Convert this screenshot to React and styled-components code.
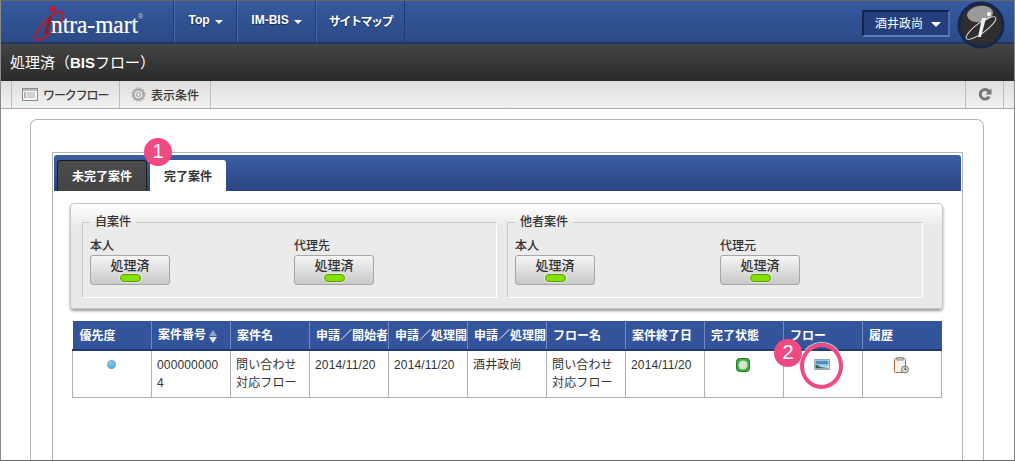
import styled, { createGlobalStyle } from 'styled-components';

const Global = createGlobalStyle`
  html, body {
    margin: 0;
    padding: 0;
    background: #fff;
  }
  * {
    box-sizing: border-box;
  }
`;

const jp = `"Liberation Sans", "Noto Sans CJK JP", sans-serif`;

const Page = styled.div`
  position: relative;
  width: 1015px;
  height: 461px;
  overflow: hidden;
  background: #fff;
  font-family: ${jp};
  border: 1px solid #8a8a8a;
  border-top-color: #666;
  border-bottom-color: #666;
  color: #333;
`;

const Header = styled.div`
  display: flex;
  height: 43px;
  background: linear-gradient(#365a9e, #2b4a86);
  border-bottom: 2px solid #22365f;
`;

const LogoBox = styled.div`
  width: 173px;
  border-right: 1px solid #1f3a72;
  padding-left: 24px;
  padding-top: 1px;
`;

const NavItem = styled.div`
  display: flex;
  align-items: center;
  justify-content: center;
  gap: 5px;
  width: ${(p) => p.$w}px;
  height: 41px;
  padding-bottom: 3px;
  color: #fff;
  font-size: 12px;
  font-weight: bold;
  border-left: 1px solid #4a6cb0;
  border-right: 1px solid #1f3a72;
  text-shadow: 0 1px 1px #14264d;
`;

const Caret = styled.span`
  display: inline-block;
  margin-top: 4px;
  border-left: ${(p) => p.$size || 4}px solid transparent;
  border-right: ${(p) => p.$size || 4}px solid transparent;
  border-top: ${(p) => p.$size || 4}px solid #fff;
`;

const Kana = styled.span`
  letter-spacing: ${(p) => p.$ls}px;
`;

const HeaderRight = styled.div`
  display: flex;
  align-items: flex-start;
  margin-left: auto;
  padding-right: 9px;
  gap: 7px;
`;

const UserSelect = styled.div`
  display: flex;
  align-items: center;
  justify-content: space-between;
  width: 88px;
  height: 27px;
  margin-top: 9px;
  padding: 0 7px 2px 11px;
  color: #fff;
  font-size: 12px;
  background: #243f7c;
  border: 2px solid #13244d;
  border-right-color: #4a6cb0;
  border-bottom-color: #5f7db8;
`;

const Avatar = styled.svg`
  width: 48px;
  height: 48px;
  position: relative;
  z-index: 2;
`;

const TitleBar = styled.div`
  height: 37px;
  padding: 9px 0 0 9px;
  background: linear-gradient(#454545, #2a2a2a);
  color: #fff;
  font-size: 15px;
  line-height: 20px;
`;

const Toolbar = styled.div`
  display: flex;
  height: 28px;
  padding: 0 10px;
  background: linear-gradient(#dedede, #f1f1f1);
  border-bottom: 1px solid #a8a8a8;
`;

const ToolItem = styled.div`
  display: flex;
  align-items: center;
  gap: 5px;
  width: ${(p) => p.$w}px;
  height: 27px;
  padding-left: ${(p) => p.$pad}px;
  padding-bottom: 1px;
  font-size: 12px;
  font-weight: 500;
  color: #3a3a3a;
  border-left: 1px solid #bdbdbd;
  border-right: ${(p) => (p.$last ? '1px solid #bdbdbd' : 'none')};
`;

const ReloadItem = styled(ToolItem)`
  margin-left: auto;
  justify-content: center;
  padding-left: 0;
`;

const Content = styled.div`
  padding: 10px 30px 0 29px;
`;

const Card = styled.div`
  height: 360px;
  padding: 32px 20px 0 21px;
  border: 1px solid #b4b4b4;
  border-bottom: none;
  border-radius: 7px 7px 0 0;
`;

const Panel = styled.div`
  height: 320px;
  padding: 2px 1px 0;
  border: 1px solid #b4b4b4;
  border-bottom: none;
`;

const TabBar = styled.div`
  display: flex;
  align-items: flex-end;
  gap: 3px;
  height: 36px;
  padding-left: 3px;
  background: linear-gradient(#3b5fa5, #2a4580);
  border-radius: 3px 3px 0 0;
`;

const Tab = styled.div`
  display: flex;
  align-items: center;
  justify-content: center;
  width: ${(p) => p.$w}px;
  height: 31px;
  font-size: 12px;
  font-weight: bold;
  padding-bottom: 1px;
  border-radius: 3px 3px 0 0;
  color: ${(p) => (p.$active ? '#333' : '#fff')};
  background: ${(p) => (p.$active ? '#fff' : 'linear-gradient(#4c4c4c, #444)')};
  border: ${(p) => (p.$active ? 'none' : '1px solid #1d1d1d')};
  border-bottom: none;
`;

const SearchBox = styled.div`
  display: flex;
  gap: 10px;
  width: 873px;
  height: 106px;
  margin: 12px 0 0 16px;
  padding: 11px 20px 0 11px;
  background: linear-gradient(#fff, #e9e9e9 22%);
  border: 1px solid #c8c8c8;
  border-radius: 4px;
  box-shadow: 0 2px 3px #9a9a9a;
`;

const Group = styled.fieldset`
  display: flex;
  flex: none;
  width: ${(p) => p.$w}px;
  min-width: 0;
  height: 83px;
  margin: 0;
  padding: 11px 0 0 7px;
  border: 1px solid #c9c9c9;
  border-bottom-color: #fff;
  border-right-color: #fff;
  background: #ebebeb;
`;

const GroupTitle = styled.legend`
  padding: 0 5px;
  font-size: 12px;
  line-height: 14px;
  font-weight: 500;
  color: #333;
`;

const PersonCol = styled.div`
  flex: none;
  width: ${(p) => p.$w}px;
  font-size: 12px;
  font-weight: 500;
  line-height: 13px;
  color: #333;
`;

const StatusButton = styled.div`
  display: flex;
  flex-direction: column;
  align-items: center;
  width: 80px;
  height: 30px;
  margin-top: 2px;
  padding-top: 2px;
  font-size: 13px;
  line-height: 15px;
  font-weight: 500;
  background: linear-gradient(#f6f6f6, #c8c8c8);
  border: 1px solid #a6a6a6;
  border-radius: 3px;
`;

const Lamp = styled.span`
  display: block;
  width: 21px;
  height: 8px;
  margin-top: 1px;
  border-radius: 4px;
  background: #84e000;
  border: 1px solid #5da000;
  box-shadow: 0 0 0 1px #e4e4e4;
`;

const Table = styled.table`
  width: 870px;
  margin: 12px 0 0 18px;
  border-collapse: collapse;
  table-layout: fixed;
`;

const Th = styled.th`
  width: 79px;
  height: 29px;
  padding: 0 0 2px ${(p) => (p.$first ? 7 : 6)}px;
  overflow: hidden;
  white-space: nowrap;
  text-align: left;
  font-size: 12px;
  font-weight: bold;
  color: #fff;
  background: #33549a;
  border-left: 1px solid #6f8ac2;
  border-bottom: 2px solid #24396b;
  &:first-child {
    border-left: none;
  }
`;

const Td = styled.td`
  height: 47px;
  padding: 5px 8px 0 5px;
  vertical-align: top;
  font-size: 12px;
  letter-spacing: 0.15px;
  line-height: 18px;
  color: #333;
  border: 1px solid #b0b0b0;
  word-break: break-all;
`;

const IconTd = styled(Td)`
  padding: ${(p) => p.$top}px 2px 0 0;
  svg {
    display: block;
    margin: 0 auto;
  }
`;

const SortIcon = styled.span`
  display: inline-flex;
  flex-direction: column;
  gap: 1px;
  margin-left: 3px;
  vertical-align: middle;
`;

const SortUp = styled.span`
  border-left: 4px solid transparent;
  border-right: 4px solid transparent;
  border-bottom: 6px solid #8fa3c8;
`;

const SortDown = styled.span`
  border-left: 4px solid transparent;
  border-right: 4px solid transparent;
  border-top: 6px solid #e8edf5;
`;

const Dot = styled.span`
  display: block;
  width: 9px;
  height: 9px;
  margin: 0 auto;
  border-radius: 50%;
  background: radial-gradient(circle at 40% 35%, #8cc8ee, #3f97d4);
`;

const Badge = styled.div`
  position: absolute;
  left: ${(p) => p.$x}px;
  top: ${(p) => p.$y}px;
  width: 28px;
  height: 28px;
  border-radius: 50%;
  background: #ef4a81;
  color: #fff;
  font-size: 20px;
  line-height: 27px;
  text-align: center;
  z-index: 3;
`;

const Ring = styled.div`
  position: absolute;
  left: 799px;
  top: 342px;
  width: 43px;
  height: 46px;
  border: 4px solid #ef4a81;
  border-radius: 50%;
  box-shadow: 0 0 1px 1px rgba(255, 255, 255, 0.8);
  z-index: 2;
`;

const Logo = () => (
  <svg width="122" height="40" viewBox="0 0 122 40">
    <ellipse cx="24" cy="24" rx="6" ry="19" transform="rotate(44 24 24)" fill="none" stroke="#b81c2c" strokeWidth="2" />
    <circle cx="28" cy="7" r="3" fill="#c8182a" />
    <path d="M25.5 15l-5 17" stroke="#8c1a2a" strokeWidth="3.4" />
    <text x="26" y="31" fontFamily="Liberation Serif, serif" fontSize="25" fill="#fff" stroke="#fff" strokeWidth="0.2" textLength="87" lengthAdjust="spacingAndGlyphs">ntra-mart</text>
    <text x="113" y="17" fontFamily="Liberation Sans, sans-serif" fontSize="7" fill="#ccc">®</text>
  </svg>
);

const AvatarIcon = () => (
  <Avatar viewBox="0 0 48 48">
    <circle cx="24" cy="24" r="23.5" fill="#16264e" />
    <circle cx="24" cy="24" r="20.5" fill="#2e2e2e" />
    <ellipse cx="23" cy="13" rx="13" ry="8" transform="rotate(-8 23 13)" fill="#9a9a9a" />
    <ellipse cx="24" cy="27" rx="5" ry="18" transform="rotate(54 24 27)" fill="none" stroke="#ddd" strokeWidth="1" />
    <path d="M25 17h4l-5 19h-3z" fill="#efefef" />
    <circle cx="32" cy="13" r="2.2" fill="#efefef" />
  </Avatar>
);

const WorkflowIcon = () => (
  <svg width="16" height="13" viewBox="0 0 16 13">
    <rect x="0.5" y="0.5" width="15" height="12" fill="#f5f5f5" stroke="#8c8c8c" />
    <rect x="1" y="1" width="14" height="2" fill="#bbb" />
    <path d="M2 5h2" stroke="#4a9a3a" />
    <path d="M2 7h2" stroke="#3a78c8" />
    <path d="M2 9h2" stroke="#c84a3a" />
    <path d="M5 5h8M5 7h8M5 9h8" stroke="#aaa" />
  </svg>
);

const GearIcon = () => (
  <svg width="15" height="15" viewBox="0 0 15 15">
    <circle cx="7.5" cy="7.5" r="5" fill="none" stroke="#aaa" strokeWidth="2.4" />
    <circle cx="7.5" cy="7.5" r="6.4" fill="none" stroke="#b5b5b5" strokeWidth="1.6" strokeDasharray="2 1.35" />
    <circle cx="7.5" cy="7.5" r="2" fill="#eee" stroke="#999" />
  </svg>
);

const ReloadIcon = () => (
  <svg width="14" height="14" viewBox="0 0 14 14">
    <path d="M11.3 9.5a4.8 4.8 0 1 1 -.3-5" fill="none" stroke="#777" strokeWidth="3" />
    <path d="M13.5 1.5v6h-6z" fill="#777" />
  </svg>
);

const CompleteIcon = () => (
  <svg width="14" height="14" viewBox="0 0 14 14">
    <rect x="0.5" y="0.5" width="13" height="13" rx="3" fill="#3fae3f" stroke="#1f7a2a" />
    <circle cx="7" cy="7" r="4.5" fill="#d4e4cc" />
  </svg>
);

const ImageIcon = () => (
  <svg width="16" height="11" viewBox="0 0 16 11">
    <rect x="0.5" y="0.5" width="15" height="10" fill="#eef4f8" stroke="#9aa8b2" />
    <rect x="1.5" y="1.5" width="13" height="4" fill="#4f8fc8" />
    <rect x="1.5" y="5.5" width="13" height="2" fill="#8fc4dc" />
    <path d="M1.5 5.5l5 2.5 8 1v.5h-13z" fill="#2f5f4f" />
  </svg>
);

const HistoryIcon = () => (
  <svg width="15" height="17" viewBox="0 0 15 17">
    <rect x="0.5" y="1.5" width="11" height="14" rx="1" fill="#f4f0ea" stroke="#a8683c" />
    <rect x="3" y="0.5" width="6" height="2.5" fill="#ccc" stroke="#888" />
    <circle cx="11" cy="12.5" r="3.5" fill="#d8d8d8" stroke="#777" />
    <path d="M11 10.5v2h1.5" fill="none" stroke="#444" />
  </svg>
);

const groups = [
  { title: '自案件', w: 415, col: 204, people: ['本人', '代理先'] },
  { title: '他者案件', w: 416, col: 205, people: ['本人', '代理元'] },
];

const headers = ['優先度', '案件番号', '案件名', '申請／開始者', '申請／処理開始', '申請／処理開始', 'フロー名', '案件終了日', '完了状態', 'フロー', '履歴'];

const App = () => {
  return (
    <Page>
      <Global />
      <Header>
        <LogoBox>
          <Logo />
        </LogoBox>
        <NavItem $w={63}>
          Top <Caret />
        </NavItem>
        <NavItem $w={79}>
          IM-BIS <Caret />
        </NavItem>
        <NavItem $w={89}>
          <Kana $ls={-1.4}>サイトマップ</Kana>
        </NavItem>
        <HeaderRight>
          <UserSelect>
            酒井政尚
            <Caret $size={5} />
          </UserSelect>
          <AvatarIcon />
        </HeaderRight>
      </Header>
      <TitleBar>処理済（<b>BIS</b>フロー）</TitleBar>
      <Toolbar>
        <ToolItem $w={108} $pad={10}>
          <WorkflowIcon />
          <Kana $ls={-1.1}>ワークフロー</Kana>
        </ToolItem>
        <ToolItem $w={92} $pad={11} $last>
          <GearIcon />
          表示条件
        </ToolItem>
        <ReloadItem $w={39} $last>
          <ReloadIcon />
        </ReloadItem>
      </Toolbar>
      <Content>
        <Card>
          <Panel>
            <TabBar>
              <Tab $w={90}>未完了案件</Tab>
              <Tab $w={76} $active>
                完了案件
              </Tab>
            </TabBar>
            <SearchBox>
              {groups.map((g) => (
                <Group key={g.title} $w={g.w}>
                  <GroupTitle>{g.title}</GroupTitle>
                  {g.people.map((name) => (
                    <PersonCol key={name} $w={g.col}>
                      {name}
                      <StatusButton>
                        処理済
                        <Lamp />
                      </StatusButton>
                    </PersonCol>
                  ))}
                </Group>
              ))}
            </SearchBox>
            <Table>
              <thead>
                <tr>
                  {headers.map((h, i) => (
                    <Th key={i} $first={i === 0}>
                      {h}
                      {i === 1 && (
                        <SortIcon>
                          <SortUp />
                          <SortDown />
                        </SortIcon>
                      )}
                    </Th>
                  ))}
                </tr>
              </thead>
              <tbody>
                <tr>
                  <IconTd $top={9}>
                    <Dot />
                  </IconTd>
                  <Td>0000000004</Td>
                  <Td>問い合わせ対応フロー</Td>
                  <Td>2014/11/20</Td>
                  <Td>2014/11/20</Td>
                  <Td>酒井政尚</Td>
                  <Td>問い合わせ対応フロー</Td>
                  <Td>2014/11/20</Td>
                  <IconTd $top={7}>
                    <CompleteIcon />
                  </IconTd>
                  <IconTd $top={8}>
                    <ImageIcon />
                  </IconTd>
                  <IconTd $top={6}>
                    <HistoryIcon />
                  </IconTd>
                </tr>
              </tbody>
            </Table>
          </Panel>
        </Card>
      </Content>
      <Badge $x={143} $y={137}>1</Badge>
      <Badge $x={773} $y={338}>2</Badge>
      <Ring />
    </Page>
  );
};

export default App;
